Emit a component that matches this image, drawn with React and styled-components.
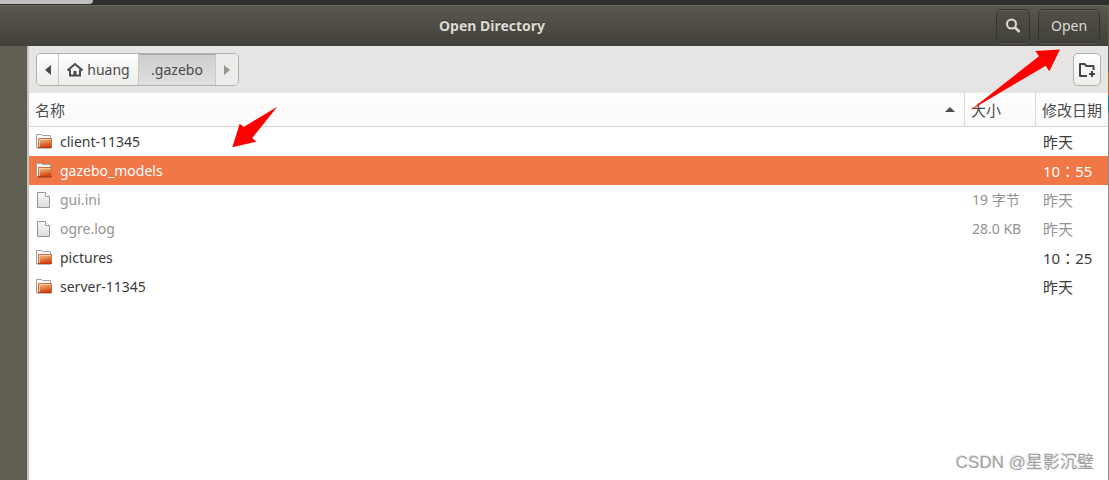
import React, { useState } from "react";
import styled, { createGlobalStyle, css } from "styled-components";

const places = [
  { name: "client-11345", folder: true, size: "", date: "昨天" },
  { name: "gazebo_models", folder: true, size: "", date: "10：55" },
  { name: "gui.ini", folder: false, size: "19 字节", date: "昨天" },
  { name: "ogre.log", folder: false, size: "28.0 KB", date: "昨天" },
  { name: "pictures", folder: true, size: "", date: "10：25" },
  { name: "server-11345", folder: true, size: "", date: "昨天" },
];

function FolderIcon() {
  return (
    <svg width="16" height="16" viewBox="0 0 16 16" aria-hidden="true">
      <defs>
        <linearGradient id="folderFront" x1="0" y1="0" x2="0.3" y2="1">
          <stop offset="0" stopColor="#f0c49a" />
          <stop offset="0.5" stopColor="#e58a4e" />
          <stop offset="1" stopColor="#d2450f" />
        </linearGradient>
      </defs>
      <path d="M0.5 13.5V0.5h5l1 1h8v12z" fill="#fbfaf9" stroke="#a3a09c" />
      <path d="M2.5 4.5h13v9h-13z" fill="url(#folderFront)" stroke="#cf6f43" />
      <path d="M3.5 13V5.5h11" fill="none" stroke="#f9dcbd" strokeOpacity="0.7" />
      <path d="M2 13.5h14" stroke="#bf3a10" />
      <path d="M1 14.5h14" stroke="#000" strokeOpacity="0.25" />
    </svg>
  );
}

function FileIcon() {
  return (
    <svg width="16" height="16" viewBox="0 0 16 16" aria-hidden="true">
      <defs>
        <linearGradient id="sheet" x1="0" y1="0" x2="0" y2="1">
          <stop offset="0" stopColor="#f8f8f8" />
          <stop offset="1" stopColor="#dcdcdc" />
        </linearGradient>
      </defs>
      <path d="M1.5 0.5h8l4 4v11h-12z" fill="url(#sheet)" stroke="#969696" />
      <path d="M9.5 0.5v4h4" fill="#fff" stroke="#a2a2a2" />
    </svg>
  );
}

function HomeIcon() {
  return (
    <svg width="16" height="16" viewBox="0 0 16 16" aria-hidden="true">
      <path d="M0.5 8.5L8 2l7.5 6.5" fill="none" stroke="currentColor" strokeWidth="2" />
      <path d="M3 7.5v6h10v-6" fill="none" stroke="currentColor" strokeWidth="2" />
      <path d="M6.5 9h3v5h-3z" fill="currentColor" />
    </svg>
  );
}

function SearchIcon() {
  return (
    <svg width="16" height="16" viewBox="0 0 16 16" aria-hidden="true">
      <circle cx="6.500" cy="6" r="4.500" fill="none" stroke="currentColor" strokeWidth="2" />
      <path d="M9.500 9l5 5" stroke="currentColor" strokeWidth="2.600" />
    </svg>
  );
}

function NewFolderIcon() {
  return (
    <svg width="18" height="16" viewBox="0 0 18 16" aria-hidden="true">
      <path
        d="M9 14H2V2h4.500l2 2H15.500v4"
        fill="none"
        stroke="currentColor"
        strokeWidth="2"
        strokeLinejoin="round"
      />
      <path d="M14 9v6M11 12h6" stroke="currentColor" strokeWidth="2" />
    </svg>
  );
}

function Caret({ direction }) {
  const shapes = {
    left: "M8 1L2 6l6 5z",
    right: "M2 1l6 5-6 5z",
    up: "M0 8l5-5 5 5z",
  };
  return (
    <svg width="10" height="12" viewBox="0 0 10 12" aria-hidden="true">
      <path d={shapes[direction]} fill="currentColor" />
    </svg>
  );
}

function App() {
  const [selected, setSelected] = useState("gazebo_models");

  return (
    <Desktop>
      <GlobalStyle />
      <TopStrip>
        <BackTab />
      </TopStrip>
      <Header>
        <Title>Open Directory</Title>
        <HeaderButton aria-label="Search">
          <SearchIcon />
        </HeaderButton>
        <HeaderButton $wide>Open</HeaderButton>
      </Header>
      <Body>
        <Dialog>
          <Toolbar>
            <PathBar aria-label="Path">
              <PathButton $width={21} aria-label="Back">
                <Caret direction="left" />
              </PathButton>
              <PathButton $width={80}>
                <HomeIcon />
                huang
              </PathButton>
              <PathButton $width={77} $active>
                .gazebo
              </PathButton>
              <PathButton $width={23} disabled aria-label="Forward">
                <Caret direction="right" />
              </PathButton>
            </PathBar>
            <CreateButton aria-label="Create folder">
              <NewFolderIcon />
            </CreateButton>
          </Toolbar>
          <FileTable>
            <colgroup>
              <col />
              <SizeCol />
              <DateCol />
            </colgroup>
            <thead>
              <tr>
                <HeadCell aria-sort="ascending">
                  <SortLabel>
                    名称
                    <Caret direction="up" />
                  </SortLabel>
                </HeadCell>
                <HeadCell>大小</HeadCell>
                <HeadCell>修改日期</HeadCell>
              </tr>
            </thead>
            <tbody>
              {places.map((item) => (
                <Row
                  key={item.name}
                  $muted={!item.folder}
                  $selected={item.name === selected}
                  onClick={() => item.folder && setSelected(item.name)}
                >
                  <Cell>
                    <FileName>
                      {item.folder ? <FolderIcon /> : <FileIcon />}
                      {item.name}
                    </FileName>
                  </Cell>
                  <Cell>{item.size}</Cell>
                  <DateCell>{item.date}</DateCell>
                </Row>
              ))}
            </tbody>
          </FileTable>
        </Dialog>
      </Body>
      <RowArrow width="46" height="42" viewBox="0 0 46 42" aria-hidden="true">
        <path d="M0.300 41.300L7.700 17.700l4 3.300L45.300 0.700L20.300 32l4 3.700z" fill="#fe0000" />
      </RowArrow>
      <OpenArrow width="92" height="62" viewBox="0 0 92 62" aria-hidden="true">
        <path d="M91 0.500L66.300 2l3.700 5.300L1 61.500L76.700 16.700l3.600 5.600z" fill="#fe0000" />
      </OpenArrow>
      <Watermark>CSDN @星影沉璧</Watermark>
    </Desktop>
  );
}

const GlobalStyle = createGlobalStyle`
  * {
    box-sizing: border-box;
  }

  body {
    margin: 0;
    background: #605e50;
  }

  button {
    font: inherit;
    padding: 0;
  }
`;

const Desktop = styled.div`
  position: relative;
  display: flex;
  flex-direction: column;
  min-height: 100vh;
  overflow: hidden;
  background: #605e50;
  color: #3c3c3c;
  font-family: "Noto Sans", "Noto Sans CJK SC", sans-serif;
  font-size: 14px;
  line-height: 20px;
`;

const TopStrip = styled.div`
  height: 5px;
  background: #30312c;
`;

const BackTab = styled.div`
  width: 93px;
  height: 4px;
  border-radius: 0 0 4px 0;
  background: #c1c0bd;
`;

const Header = styled.header`
  display: grid;
  grid-template-columns: 1fr 34px 62px;
  column-gap: 8px;
  align-items: center;
  height: 41px;
  margin-right: 1px;
  padding-right: 8px;
  border-top: 1px solid #68655b;
  border-top-right-radius: 6px;
  background: linear-gradient(#5b584f, #403f39);
  color: #dfdbd2;
`;

const Title = styled.h1`
  margin: 0;
  padding-right: 4px;
  font-size: 14px;
  font-weight: 700;
  text-align: center;
  text-shadow: 0 -1px #33322d;
`;

const HeaderButton = styled.button`
  display: flex;
  align-items: center;
  justify-content: center;
  width: ${({ $wide }) => ($wide ? "62px" : "34px")};
  height: 34px;
  border: 1px solid #33322d;
  border-radius: 5px;
  background: linear-gradient(#514f47, #42413b);
  box-shadow: inset 0 1px #5e5c53, 0 1px #55534b;
  color: inherit;
`;

const Body = styled.div`
  display: flex;
  flex: 1;
  padding-left: 27px;
  padding-right: 1px;
  background: linear-gradient(
      #606060 26px,
      #b36a25 26px,
      #b36a25 48px,
      #1c7fa5 50px,
      #1c7fa5 64px,
      #8b8b8b 70px
    )
    right / 1px 100% no-repeat;
`;

const Dialog = styled.main`
  flex: 1;
  min-width: 0;
  border-left: 2px solid #c5c2c0;
  background: #fff;
`;

const Toolbar = styled.div`
  display: flex;
  align-items: center;
  justify-content: space-between;
  height: 47px;
  padding: 0 7px;
  background: #e6e5e4;
`;

const PathBar = styled.nav`
  display: flex;
  height: 33px;
  overflow: hidden;
  border: 1px solid #b3b0ad;
  border-radius: 5px;
`;

const PathButton = styled.button`
  display: flex;
  align-items: center;
  justify-content: center;
  gap: 4px;
  width: ${({ $width }) => $width}px;
  border: 0;
  background: linear-gradient(#fefefe, #ededec);
  color: #4a4a4a;

  & + & {
    border-left: 1px solid #cbc9c6;
  }

  ${({ $active }) =>
    $active &&
    css`
      background: linear-gradient(#cdcdcd, #e0e0e0);
      box-shadow: inset 0 1px #a9a8a6;
    `}

  &:disabled {
    background: #ececeb;
    color: #969693;
  }
`;

const CreateButton = styled.button`
  display: flex;
  align-items: center;
  justify-content: center;
  width: 28px;
  height: 33px;
  border: 1px solid #b3b0ad;
  border-radius: 5px;
  background: linear-gradient(#fefefe, #ededec);
  color: #454545;
`;

const FileTable = styled.table`
  width: 100%;
  table-layout: fixed;
  border-collapse: separate;
  border-spacing: 0;
`;

const SizeCol = styled.col`
  width: 71px;
`;

const DateCol = styled.col`
  width: 73px;
`;

const HeadCell = styled.th`
  height: 34px;
  padding: 0 6px;
  border-bottom: 1px solid #d9d7d4;
  background: linear-gradient(#fff, #f9f9f9);
  color: #4c4c4c;
  font-size: 15px;
  font-weight: 400;
  text-align: left;
  white-space: nowrap;

  & + & {
    border-left: 1px solid #dedcda;
  }
`;

const SortLabel = styled.div`
  display: flex;
  align-items: center;
  justify-content: space-between;
  padding-right: 3px;
`;

const Row = styled.tr`
  color: ${({ $muted }) => ($muted ? "#949391" : "#3c3c3c")};

  ${({ $selected }) =>
    $selected &&
    css`
      background: #f07746;
      color: #fff;
    `}
`;

const Cell = styled.td`
  height: 29px;
  padding: 0 7px;
  white-space: nowrap;

  & + & {
    padding-left: 8px;
  }
`;

/* the TC face keeps the full-width colon in the middle of its box */
const DateCell = styled(Cell)`
  padding: 0 0 0 8px;
  font-family: "Noto Sans", "Noto Sans CJK TC", sans-serif;
  font-size: 15px;
`;

const FileName = styled.div`
  display: flex;
  align-items: center;
  gap: 8px;
`;

const RowArrow = styled.svg`
  position: absolute;
  top: 106px;
  left: 232px;
`;

const OpenArrow = styled.svg`
  position: absolute;
  top: 49px;
  right: 48px;
`;

const Watermark = styled.div`
  position: absolute;
  right: 15px;
  bottom: 7px;
  color: #a2a2a2;
  font-family: "Liberation Sans", "Noto Sans CJK SC", sans-serif;
  font-size: 17px;
  text-shadow: -1px -1px #e4e4e4;
`;

export default App;
